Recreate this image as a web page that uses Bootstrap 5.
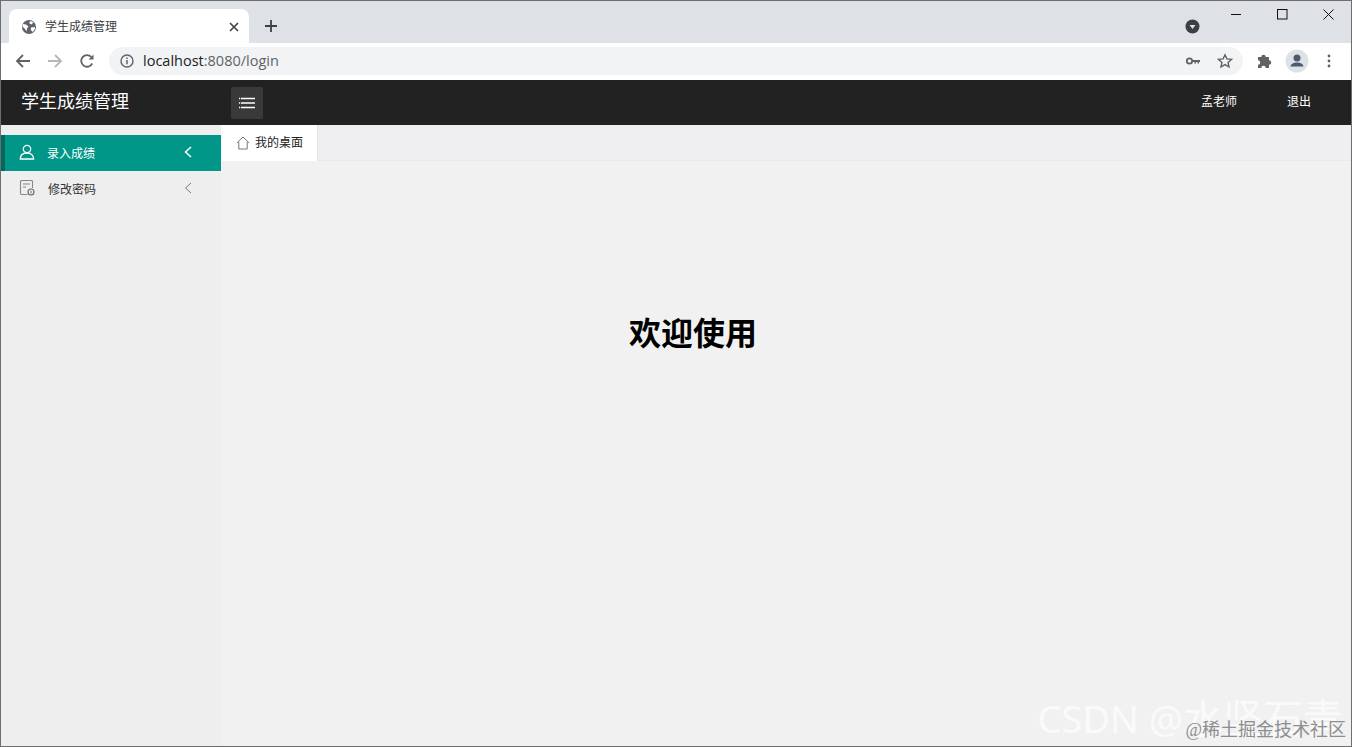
<!DOCTYPE html>
<html lang="zh-CN">
<head>
    <meta charset="UTF-8">
    <meta name="viewport" content="width=device-width, initial-scale=1.0">
    <title>学生成绩管理</title>
    <link href="https://cdn.jsdelivr.net/npm/bootstrap@5.3.0/dist/css/bootstrap.min.css" rel="stylesheet">
    <style>
        html, body { height: 100%; overflow: hidden; }
        body {
            font-family: "Liberation Sans", "Noto Sans CJK SC", sans-serif;
            background: #f1f1f1;
        }
        .win-frame {
            width: 1352px; height: 747px;
            border: 1px solid #6e6e6e;
            position: relative;
            overflow: hidden;
        }
        .tab-strip { height: 42px; background: #dee1e6; padding: 8px 0 0 8px; }
        .win-tab {
            width: 240px; height: 34px; background: #fff;
            border-radius: 8px 8px 0 0;
            padding: 2px 10px 0 12px;
            font-size: 12px; color: #3c4043;
        }
        .new-tab { width: 44px; height: 34px; }
        .win-btns { width: 138px; height: 26px; margin-top: -8px; }
        .win-btn { width: 46px; height: 26px; }
        .profile-dot { margin-right: 13px; margin-top: 10px; }
        .tool-strip { height: 37px; background: #fff; padding: 0 14px 1px 6px; }
        .tool-btn { width: 32px; height: 32px; }
        .omnibox {
            width: 1134px; height: 28px; background: #f1f3f4;
            border-radius: 14px; margin-left: 6px; padding: 0 10px 0 11px;
            font-family: "Open Sans", "Liberation Sans", sans-serif;
            font-size: 14.5px; color: #202124;
        }
        .omnibox .url-rest { color: #5f6368; }
        .url-text { margin-left: 9px; }
        .ext-gap { margin-left: 12px; }
        .top-bar { height: 45px; background: #222; color: #fff; }
        .brand-box { width: 220px; padding-left: 20px; font-size: 18px; }
        .menu-toggle {
            width: 32px; height: 32px; margin-left: 10px;
            background: #393939; border-radius: 2px;
        }
        .user-link { font-size: 12px; color: #fff; margin-top: -2px; }
        .user-name { margin-right: 50px; }
        .user-out { margin-right: 40px; }
        .main-area { height: 621px; }
        .side-menu { width: 220px; background: #eee; padding-top: 10px; }
        .side-item {
            height: 36px; font-size: 12px; color: #333;
            padding: 0 29px 2px 18px;
        }
        .side-item.picked {
            background: #009688; color: #fff;
            border-left: 4px solid #00695f;
            padding-left: 14px;
        }
        .side-label { margin-left: 13px; margin-top: 4px; }
        .side-item.picked .side-label { margin-left: 12px; }
        .tab-row { height: 36px; background: #efeef0; border-bottom: 1px solid #e9e9e9; }
        .desk-tab {
            width: 97px; height: 36px; background: #fff;
            font-size: 12px; color: #222; padding-left: 15px;
            border-right: 1px solid #e6e6e6;
        }
        .desk-label { margin-left: 5px; }
        .desk-body { background: #f1f1f1; padding: 155px 0 0 408px; }
        .welcome-text { font-size: 32px; font-weight: 700; color: #000; line-height: 36px; margin: 0; }
        .mark-csdn {
            position: absolute; right: 8px; bottom: 4px;
            font-family: "Noto Sans", "Noto Sans CJK SC", sans-serif;
            font-size: 38px; line-height: 48px; color: #fff; opacity: .7;
            white-space: nowrap;
        }
        .mark-cjk { font-size: 40px; }
        .mark-juejin {
            position: absolute; right: 5px; bottom: 5px;
            font-family: "Liberation Serif", "Noto Sans CJK SC", sans-serif;
            font-size: 18px; line-height: 22px; color: #8c8e90; white-space: nowrap;
        }
    </style>
</head>
<body>
<div class="win-frame d-flex flex-column">
    <div class="tab-strip d-flex align-items-start flex-shrink-0">
        <div class="win-tab d-flex align-items-center">
            <svg width="16" height="16" viewBox="0 0 16 16" class="flex-shrink-0"><circle cx="8" cy="8" r="7" fill="#5f6368"/><path d="M2 5l3 .5 2.500 2-1.500 2-.5 3-1.500-2.500-2.500-2.500zM9 2l3.500 1.200-2 2.300-2.200-1.300zM10 8.500l3.800-.5.2 2-2.200 3-2-2z" fill="#fff"/></svg>
            <span class="ms-2 flex-grow-1">学生成绩管理</span>
            <svg width="10" height="10" viewBox="0 0 10 10"><path d="M1 1l8 8M9 1l-8 8" stroke="#3c4043" stroke-width="1.600"/></svg>
        </div>
        <div class="new-tab d-flex align-items-center justify-content-center">
            <svg width="14" height="14" viewBox="0 0 14 14"><path d="M7 1v12M1 7h12" stroke="#3c4043" stroke-width="1.800"/></svg>
        </div>
        <div class="flex-grow-1"></div>
        <div class="profile-dot">
            <svg width="15" height="15" viewBox="0 0 15 15" class="d-block"><circle cx="7.500" cy="7.500" r="7" fill="#3c4043"/><path d="M4.500 6h6l-3 4z" fill="#dee1e6"/></svg>
        </div>
        <div class="win-btns d-flex flex-shrink-0">
            <div class="win-btn d-flex align-items-center justify-content-center"><svg width="11" height="11" viewBox="0 0 11 11"><path d="M0 5.500h10" stroke="#111"/></svg></div>
            <div class="win-btn d-flex align-items-center justify-content-center"><svg width="11" height="11" viewBox="0 0 11 11"><rect x=".5" y=".5" width="9.500" height="9.500" fill="none" stroke="#111"/></svg></div>
            <div class="win-btn d-flex align-items-center justify-content-center"><svg width="11" height="11" viewBox="0 0 11 11"><path d="M.5.500l10 10M10.500.500l-10 10" stroke="#111"/></svg></div>
        </div>
    </div>

    <div class="tool-strip d-flex align-items-center flex-shrink-0">
        <div class="tool-btn d-flex align-items-center justify-content-center">
            <svg width="16" height="16" viewBox="0 0 16 16"><path d="M15 8H2M8 2L2 8l6 6" fill="none" stroke="#5f6368" stroke-width="1.800"/></svg>
        </div>
        <div class="tool-btn d-flex align-items-center justify-content-center">
            <svg width="16" height="16" viewBox="0 0 16 16"><path d="M1 8h13M8 2l6 6-6 6" fill="none" stroke="#b4b7bb" stroke-width="1.800"/></svg>
        </div>
        <div class="tool-btn d-flex align-items-center justify-content-center">
            <svg width="16" height="16" viewBox="0 0 16 16"><path d="M13.200 10.500A5.800 5.800 0 1 1 12.300 4" fill="none" stroke="#5f6368" stroke-width="1.800"/><path d="M14.500 1.500v5h-5z" fill="#5f6368"/></svg>
        </div>
        <div class="omnibox d-flex align-items-center">
            <svg width="14" height="14" viewBox="0 0 14 14"><circle cx="7" cy="7" r="6" fill="none" stroke="#5f6368" stroke-width="1.400"/><path d="M7 6v4.200M7 3.400v1.500" stroke="#5f6368" stroke-width="1.500"/></svg>
            <span class="url-text">localhost<span class="url-rest">:8080/login</span></span>
            <span class="flex-grow-1"></span>
            <svg width="16" height="16" viewBox="0 0 16 16"><circle cx="4.500" cy="8" r="2.700" fill="none" stroke="#5f6368" stroke-width="1.800"/><path d="M7 7h8v2h-1v1.500h-1.500V9H11v1.500H9.500V9H7z" fill="#5f6368"/></svg>
            <svg width="16" height="16" viewBox="0 0 16 16" class="ms-3"><path d="M8 1.800l1.900 4.100 4.500.5-3.300 3 .9 4.500L8 11.600l-4 2.300.9-4.500-3.300-3 4.500-.5z" fill="none" stroke="#5f6368" stroke-width="1.400"/></svg>
        </div>
        <div class="d-flex align-items-center ms-auto">
            <svg width="16" height="16" viewBox="0 0 16 16"><path d="M1 4h3.300a2.200 2.200 0 1 1 4.400 0H12v3.300a2.200 2.200 0 1 1 0 4.400V15H8.700a2.200 2.200 0 1 0-4.400 0H1v-3.300a2.200 2.200 0 1 0 0-4.400z" fill="#5f6368"/></svg>
            <svg width="24" height="24" viewBox="0 0 24 24" class="ext-gap"><circle cx="12" cy="12" r="11.500" fill="#dee1e6"/><circle cx="12" cy="9" r="3.500" fill="#4d5a70"/><path d="M5.500 17.500c.5-3 3.500-4 6.500-4s6 1 6.500 4z" fill="#4d5a70"/></svg>
            <svg width="16" height="16" viewBox="0 0 16 16" class="ext-gap"><circle cx="8" cy="3" r="1.400" fill="#5f6368"/><circle cx="8" cy="8" r="1.400" fill="#5f6368"/><circle cx="8" cy="13" r="1.400" fill="#5f6368"/></svg>
        </div>
    </div>

    <nav class="top-bar d-flex align-items-center flex-shrink-0">
        <div class="brand-box">学生成绩管理</div>
        <div class="menu-toggle d-flex align-items-center justify-content-center">
            <svg width="16" height="12" viewBox="0 0 16 12"><path d="M2 1.500h14M2 6h14M2 10.500h14" stroke="#fff" stroke-width="1.300"/><path d="M0 1.500h1.200M0 6h1.200M0 10.500h1.200" stroke="#fff" stroke-width="1.300"/></svg>
        </div>
        <div class="ms-auto d-flex">
            <span class="user-link user-name">孟老师</span>
            <span class="user-link user-out">退出</span>
        </div>
    </nav>

    <div class="main-area d-flex flex-grow-1">
        <div class="side-menu flex-shrink-0">
            <div class="side-item picked d-flex align-items-center">
                <svg width="16" height="16" viewBox="0 0 16 16"><circle cx="8" cy="5" r="3.700" fill="none" stroke="#fff" stroke-width="1.300"/><path d="M1.300 15c0-3.600 2.500-6 6.700-6s6.700 2.400 6.700 6z" fill="none" stroke="#fff" stroke-width="1.300"/></svg>
                <span class="side-label flex-grow-1">录入成绩</span>
                <svg width="8" height="12" viewBox="0 0 8 12"><path d="M7 1L1.500 6 7 11" fill="none" stroke="#fff" stroke-width="1.500"/></svg>
            </div>
            <div class="side-item d-flex align-items-center">
                <svg width="16" height="16" viewBox="0 0 16 16"><path d="M13.500 8V1.500a1 1 0 0 0-1-1h-10a1 1 0 0 0-1 1v12a1 1 0 0 0 1 1h6M4 4h7M4 7h3" fill="none" stroke="#888" stroke-width="1.100"/><circle cx="12" cy="12" r="3" fill="none" stroke="#666" stroke-width="1.100"/><path d="M12 10.800v2.500" stroke="#666"/></svg>
                <span class="side-label flex-grow-1">修改密码</span>
                <svg width="8" height="12" viewBox="0 0 8 12"><path d="M7 1L1.500 6 7 11" fill="none" stroke="#777" stroke-width="1"/></svg>
            </div>
        </div>
        <div class="flex-grow-1 d-flex flex-column">
            <div class="tab-row flex-shrink-0">
                <div class="desk-tab d-flex align-items-center">
                    <svg width="14" height="14" viewBox="0 0 14 14"><path d="M.8 7L7 1l6.200 6M2.800 6v7h8.400V6" fill="none" stroke="#666" stroke-width=".9"/></svg>
                    <span class="desk-label">我的桌面</span>
                </div>
            </div>
            <div class="desk-body flex-grow-1">
                <h1 class="welcome-text">欢迎使用</h1>
            </div>
        </div>
    </div>

    <div class="mark-csdn">CSDN @<span class="mark-cjk">水坚石青</span></div>
    <div class="mark-juejin">@稀土掘金技术社区</div>
</div>
<script src="https://cdn.jsdelivr.net/npm/bootstrap@5.3.0/dist/js/bootstrap.bundle.min.js"></script>
</body>
</html>
